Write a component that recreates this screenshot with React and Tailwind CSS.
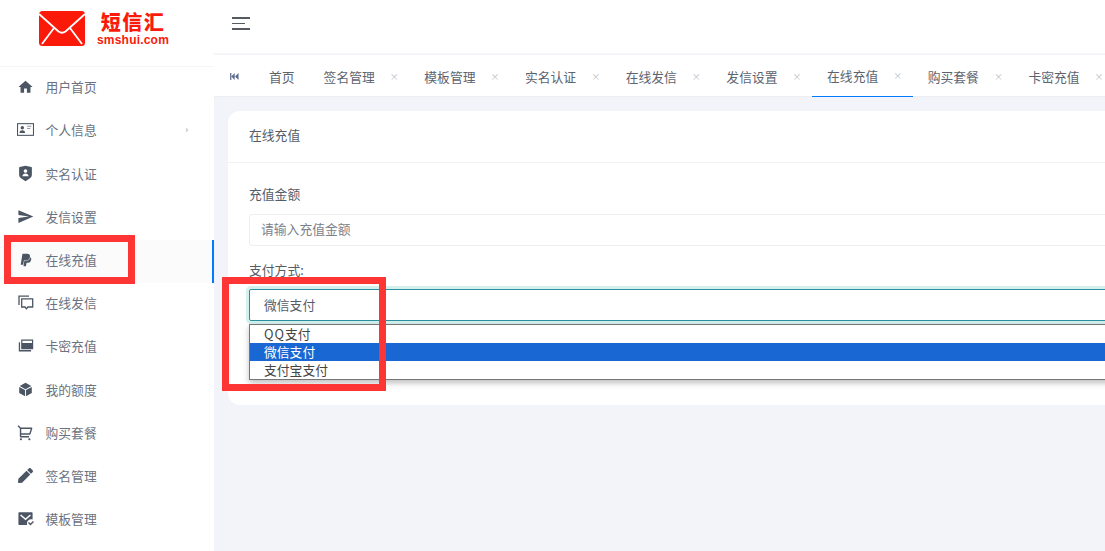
import React from "react";
import { MdHome, MdSend } from "react-icons/md";
import { FaPaypal, FaPen } from "react-icons/fa";
import { RiShieldUserFill, RiShoppingCart2Line, RiMailCheckFill } from "react-icons/ri";

const font = "font-['Noto_Sans_CJK_SC','Microsoft_YaHei',sans-serif]";

const IdIcon = (props) => (
  <svg viewBox="0 0 16 12" fill="none" {...props}>
    <rect x="0.5" y="0.5" width="15" height="11" stroke="currentColor" />
    <circle cx="5" cy="4.4" r="1.6" fill="currentColor" />
    <path d="M2.4 9.2c.2-1.8 1.2-2.4 2.6-2.4s2.4.6 2.6 2.4z" fill="currentColor" />
    <path d="M9.5 3h4M9.5 5h3" stroke="currentColor" strokeOpacity="0.6" />
  </svg>
);

const ChatIcon = (props) => (
  <svg viewBox="0 0 16 16" fill="none" stroke="currentColor" strokeWidth="1.3" {...props}>
    <path d="M1 10V1.2h10" />
    <path d="M3.7 3.8h11v8.2H10l-1.6 1.8L7 12H3.7z" />
  </svg>
);

const CardIcon = (props) => (
  <svg viewBox="0 0 16 16" fill="currentColor" {...props}>
    <path d="M3.2 1.5h12v9.8h-12zM4.4 5h9.6V2.8H4.4z" fillRule="evenodd" />
    <path d="M.8 4.2h1.3v7.9h11v1.3H.8z" />
  </svg>
);

const BoxIcon = (props) => (
  <svg viewBox="0 0 16 16" fill="currentColor" {...props}>
    <path d="M8 .8l6.2 3.5L8 7.7 1.8 4.3z" />
    <path d="M1.3 5.2L7.5 8.6v6.6l-6.2-3.5zM14.7 5.2L8.5 8.6v6.6l6.2-3.5z" />
  </svg>
);

const SkipIcon = (props) => (
  <svg viewBox="0 0 10 8" fill="currentColor" {...props}>
    <path d="M0 0h1.4v8H0zM5.2 0v8L1.4 4zM9.6 0v8L5.6 4z" />
  </svg>
);

const menu = [
  { label: "用户首页", icon: <MdHome className="w-[18px] h-[18px]" /> },
  { label: "个人信息", icon: <IdIcon className="w-[17px] h-[13px]" />, arrow: true },
  { label: "实名认证", icon: <RiShieldUserFill className="w-[17px] h-[17px]" /> },
  { label: "发信设置", icon: <MdSend className="w-[17px] h-[17px]" /> },
  { label: "在线充值", icon: <FaPaypal className="w-[14px] h-[14px]" />, active: true },
  { label: "在线发信", icon: <ChatIcon className="w-[16px] h-[16px]" /> },
  { label: "卡密充值", icon: <CardIcon className="w-[16px] h-[16px]" /> },
  { label: "我的额度", icon: <BoxIcon className="w-[15px] h-[15px]" /> },
  { label: "购买套餐", icon: <RiShoppingCart2Line className="w-[17px] h-[17px]" /> },
  { label: "签名管理", icon: <FaPen className="w-[15px] h-[15px]" /> },
  { label: "模板管理", icon: <RiMailCheckFill className="w-[17px] h-[17px]" /> },
];

const tabs = ["签名管理", "模板管理", "实名认证", "在线发信", "发信设置", "在线充值", "购买套餐", "卡密充值"];

const Logo = () => (
  <div className="h-[67.2px] border-b border-[#f4f5f8] flex items-center pl-[39px] pb-[9px] shrink-0">
    <svg viewBox="0 0 46 35" className="w-[46px] h-[35px]">
      <rect width="46" height="35" rx="3.5" fill="#fb1a0a" />
      <path d="M0 3l19.5 17.5q3.5 2.5 7 0L46 3M3 33l12-16M43 33L31 17" fill="none" stroke="#fff" strokeWidth="1.8" />
    </svg>
    <div className="ml-[12px] mb-[1px] flex flex-col items-center text-[#fb1a0a] font-black">
      <span className="text-[20px] leading-[24px] tracking-[1.5px]">短信汇</span>
      <span className="mt-[1px] text-[12px] leading-[11px] font-['Liberation_Sans',sans-serif] tracking-[0.2px]">smshui.com</span>
    </div>
  </div>
);

const Sidebar = () => (
  <aside className="w-[214px] shrink-0 h-full bg-white flex flex-col">
    <Logo />
    <nav>
      {menu.map((item) => (
        <div
          key={item.label}
          className={
            "h-[43.2px] flex items-center pb-[4px] pl-[17px] pr-[26px] text-[#6b7280] text-[12.8px] " +
            (item.active ? "bg-[#fbfbfc] border-r-2 border-[#007bff]" : "")
          }
        >
          <span className="w-[17px] flex justify-center text-[#4b5563]">{item.icon}</span>
          <span className="ml-[11.5px] flex-1">{item.label}</span>
          {item.arrow && <span className="text-[9px] text-[#8a8f98]">›</span>}
        </div>
      ))}
    </nav>
  </aside>
);

const Tab = ({ label, active }) => (
  <div
    className={
      "w-[100.7px] shrink-0 h-[42px] flex items-center pt-[2px] pl-[15px] text-[12.8px] text-[#5d6470] " +
      (active ? "border-b border-[#007bff]" : "")
    }
  >
    <span>{label}</span>
    <span className="ml-[15px] mb-[1px] text-[9px] text-[#b8bcc4] leading-none">×</span>
  </div>
);

const TabBar = () => (
  <div className="h-[42px] bg-white flex items-center border-b border-[#eceef2] mt-px">
    <span className="w-[40px] pl-[16px] pt-[1px] shrink-0 text-[#5b6b8c]">
      <SkipIcon className="w-[9px] h-[7px]" />
    </span>
    <div className="pl-[15px] pr-[14px] pt-[2px] text-[12.8px] text-[#5d6470] shrink-0">首页</div>
    <div className="flex">
      {tabs.map((t) => (
        <Tab key={t} label={t} active={t === "在线充值"} />
      ))}
    </div>
  </div>
);

const PayForm = () => (
  <div className="bg-white rounded-[12px] ml-[14px] mt-[14px] h-[294px]">
    <div className="h-[52px] pb-[4px] border-b border-[#f1f2f5] flex items-center pl-[21px] text-[12.8px] text-[#555c68]">在线充值</div>
    <div className="px-[21px] pt-[21px] text-[12.8px] text-[#555c68]">
      <div className="leading-[20px]">充值金额</div>
      <div className="mt-[10px] h-[32px] pb-[2px] border border-[#eceef2] rounded-[3px] flex items-center pl-[11px] text-[#7b818b]">请输入充值金额</div>
      <div className="mt-[14px] leading-[20px]">支付方式:</div>
      <div className="relative mt-[9px]">
        <div className="h-[32px] pb-[1px] border border-[#2a8f9e] rounded-[2px] ring-[3px] ring-[#d3f0ec] flex items-center pl-[14px]">微信支付</div>
        <div className="absolute left-0 right-0 top-[35px] bg-white border border-[#767676] shadow-[0_3px_6px_rgba(0,0,0,0.25)] text-[12.8px] leading-[18px] text-[#444]">
          <div className="pl-[14px] h-[18px]"><span className="tracking-[1px]">QQ</span>支付</div>
          <div className="pl-[14px] h-[18px] bg-[#1967d2] text-white">微信支付</div>
          <div className="pl-[14px] h-[18px]">支付宝支付</div>
        </div>
      </div>
    </div>
  </div>
);

export default function App() {
  return (
    <div className={"relative flex w-[1105px] h-[551px] overflow-hidden bg-[#f3f4f9] " + font}>
      <Sidebar />
      <main className="w-[1100px] shrink-0">
        <div className="h-[54px] pb-[6px] bg-white border-b border-[#f6f7f9] flex items-center pl-[18px]">
          <div className="w-[18px] flex flex-col gap-[4px]">
            <span className="h-[2px] bg-[#555a62]" />
            <span className="h-[1px] w-[13px] bg-[#555a62]" />
            <span className="h-[2px] bg-[#555a62]" />
          </div>
        </div>
        <TabBar />
        <PayForm />
      </main>
      <div className="absolute left-[4px] top-[235px] w-[131px] h-[49px] border-[7px] border-[#fd3535]" />
      <div className="absolute left-[222px] top-[277px] w-[164px] h-[114px] border-[7px] border-[#fd3535]" />
    </div>
  );
}
